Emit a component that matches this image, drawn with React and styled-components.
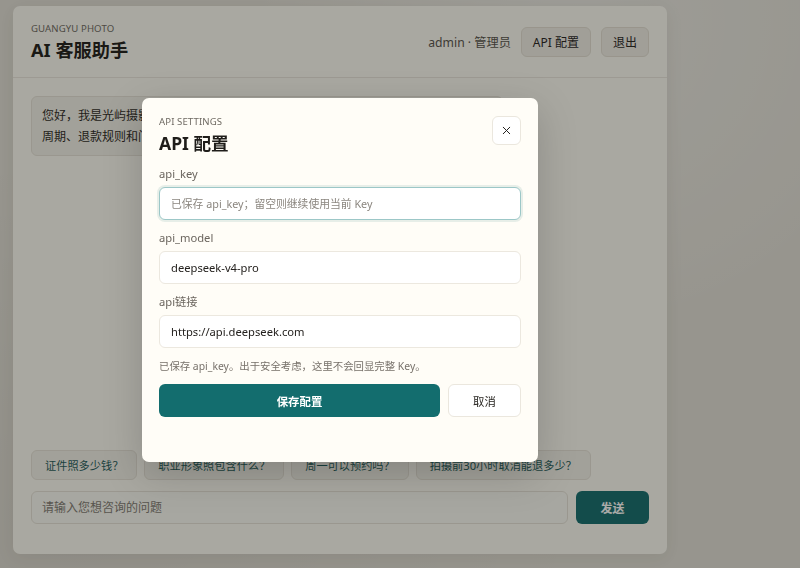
import React from "react";
import styled, { createGlobalStyle } from "styled-components";
import { X } from "lucide-react";

const GlobalStyle = createGlobalStyle`
  * { box-sizing: border-box; }
  html, body { margin: 0; padding: 0; }
  body {
    font-family: "Noto Sans", "Noto Sans CJK SC", sans-serif;
    background:
      radial-gradient(ellipse at 72% 4%, rgba(255,255,255,0.35), transparent 40%),
      radial-gradient(ellipse at 10% 90%, rgba(0,0,0,0.04), transparent 50%),
      #e2dfd7;
    min-height: 568px;
    overflow: hidden;
  }
`;

const Page = styled.div`
  padding: 6px 0 0 13px;
  height: 568px;
`;

const Card = styled.div`
  position: relative;
  width: 654px;
  height: 548px;
  background: #fdfcf5;
  border-radius: 7px;
  box-shadow: 0 4px 18px rgba(60, 50, 30, 0.08);
  display: flex;
  flex-direction: column;
`;

const Header = styled.header`
  display: flex;
  align-items: center;
  justify-content: space-between;
  padding: 16px 18px 15px;
  border-bottom: 1px solid #ebe7de;
`;

const Eyebrow = styled.div`
  font-size: 9.6px;
  line-height: 14px;
  letter-spacing: 0.01em;
  text-transform: uppercase;
  color: #6f6a63;
`;

const Title = styled.h1`
  margin: 2px 0 0;
  font-size: ${({ $size }) => $size || "18.2px"};
  line-height: 24px;
  font-weight: 700;
  color: #1f1d1a;
`;

const HeaderRight = styled.div`
  display: flex;
  align-items: center;
  gap: 10px;
`;

const User = styled.span`
  font-size: 12.2px;
  color: #56514b;
`;

const GhostButton = styled.button`
  height: 30px;
  padding: 0 11px;
  font: inherit;
  font-size: 12px;
  color: #26231f;
  background: #f1eee6;
  border: 1px solid #e4dfd4;
  border-radius: 6px;
`;

const Body = styled.div`
  flex: 1;
  display: flex;
  flex-direction: column;
  padding: 18px 18px 30px;
`;

const Messages = styled.div`
  flex: 1;
`;

const Bubble = styled.div`
  width: fit-content;
  padding: 8px 10px;
  font-size: 12px;
  line-height: 21px;
  color: #2b2824;
  white-space: pre;
  background: #f3f1e9;
  border: 1px solid #e6e2d8;
  border-radius: 6px;
`;

const Chips = styled.div`
  display: flex;
  gap: 7px;
  margin-bottom: 11px;
`;

const Chip = styled.button`
  height: 30px;
  padding: 0 13px;
  font: inherit;
  font-size: 11.2px;
  color: #1f5c5b;
  background: #f3f1e9;
  border: 1px solid #e6e2d8;
  border-radius: 6px;
`;

const Composer = styled.div`
  display: flex;
  gap: 8px;
`;

const ChatInput = styled.input`
  flex: 1;
  height: 33px;
  padding: 0 10px;
  font: inherit;
  font-size: 12px;
  background: #fbfaf4;
  border: 1px solid #e6e2d8;
  border-radius: 6px;
  &::placeholder { color: #7f7a73; }
`;

const SendButton = styled.button`
  width: 73px;
  height: 33px;
  font: inherit;
  font-size: 12px;
  font-weight: 700;
  color: #ffffff;
  background: #136d6e;
  border: none;
  border-radius: 6px;
`;

const Backdrop = styled.div`
  position: fixed;
  inset: 0;
  z-index: 10;
  background: rgba(20, 20, 15, 0.36);
`;

const ModalLayer = styled.div`
  position: absolute;
  inset: 0;
  z-index: 20;
  display: flex;
  align-items: center;
  justify-content: center;
`;

const Modal = styled.div`
  width: 396px;
  padding: 17px 17px 45px;
  background: #fffdf7;
  border-radius: 7px;
  box-shadow: 0 12px 40px rgba(0, 0, 0, 0.18);
`;

const ModalHead = styled.div`
  display: flex;
  justify-content: space-between;
  align-items: flex-start;
  margin-bottom: 10px;
`;

const CloseButton = styled.button`
  width: 29px;
  height: 29px;
  margin-top: 1px;
  display: flex;
  align-items: center;
  justify-content: center;
  padding: 0;
  color: #1f1d1a;
  background: #ffffff;
  border: 1px solid #ebe7de;
  border-radius: 6px;
`;

const Form = styled.div`
  display: flex;
  flex-direction: column;
  gap: 9px;
`;

const Field = styled.label`
  display: flex;
  flex-direction: column;
  gap: 4px;
`;

const Label = styled.span`
  font-size: 11.2px;
  line-height: 18px;
  color: #6b655e;
`;

const TextInput = styled.input`
  height: 33px;
  padding: 0 11px;
  font: inherit;
  font-size: ${({ $focus }) => ($focus ? "10.8px" : "11.2px")};
  color: #24211e;
  background: #ffffff;
  border: 1px solid ${({ $focus }) => ($focus ? "#9cc7c7" : "#ece8df")};
  box-shadow: ${({ $focus }) => ($focus ? "0 0 0 2px rgba(19,109,110,0.10)" : "none")};
  border-radius: 6px;
  outline: none;
  caret-color: #24211e;
  &::placeholder { color: #8b867f; }
`;

const Note = styled.p`
  margin: 0;
  font-size: 10.4px;
  line-height: 18px;
  color: #77716a;
`;

const Actions = styled.div`
  display: flex;
  gap: 8px;
`;

const SaveButton = styled.button`
  flex: 1;
  height: 33px;
  font: inherit;
  font-size: 11.4px;
  font-weight: 700;
  color: #ffffff;
  background: #136d6e;
  border: none;
  border-radius: 6px;
`;

const CancelButton = styled.button`
  width: 73px;
  height: 33px;
  font: inherit;
  font-size: 11.4px;
  color: #26231f;
  background: #ffffff;
  border: 1px solid #ebe7de;
  border-radius: 6px;
`;

const chips = ["证件照多少钱？", "职业形象照包含什么？", "周一可以预约吗？", "拍摄前30小时取消能退多少？"];

const App = () => {
  return (
    <Page>
      <GlobalStyle />
      <Card>
        <Header>
          <div>
            <Eyebrow>Guangyu Photo</Eyebrow>
            <Title>AI 客服助手</Title>
          </div>
          <HeaderRight>
            <User>admin · 管理员</User>
            <GhostButton>API 配置</GhostButton>
            <GhostButton>退出</GhostButton>
          </HeaderRight>
        </Header>
        <Body>
          <Messages>
            <Bubble>
              {"您好，我是光屿摄影的 AI 客服助手，可以为您解答证件照价格、套餐内容、预约拍摄\n周期、退款规则和门店相关问题。"}
            </Bubble>
          </Messages>
          <Chips>
            {chips.map((c) => (
              <Chip key={c}>{c}</Chip>
            ))}
          </Chips>
          <Composer>
            <ChatInput placeholder="请输入您想咨询的问题" />
            <SendButton>发送</SendButton>
          </Composer>
        </Body>
        <Backdrop />
        <ModalLayer>
          <Modal>
            <ModalHead>
              <div>
                <Eyebrow>API Settings</Eyebrow>
                <Title as="h2" $size="17.6px">API 配置</Title>
              </div>
              <CloseButton>
                <X size={13} strokeWidth={1.8} />
              </CloseButton>
            </ModalHead>
            <Form>
              <Field>
                <Label>api_key</Label>
                <TextInput $focus autoFocus placeholder="已保存 api_key；留空则继续使用当前 Key" />
              </Field>
              <Field>
                <Label>api_model</Label>
                <TextInput defaultValue="deepseek-v4-pro" />
              </Field>
              <Field>
                <Label>api链接</Label>
                <TextInput defaultValue="https://api.deepseek.com" />
              </Field>
              <Note>已保存 api_key。出于安全考虑，这里不会回显完整 Key。</Note>
              <Actions>
                <SaveButton>保存配置</SaveButton>
                <CancelButton>取消</CancelButton>
              </Actions>
            </Form>
          </Modal>
        </ModalLayer>
      </Card>
    </Page>
  );
};

export default App;
